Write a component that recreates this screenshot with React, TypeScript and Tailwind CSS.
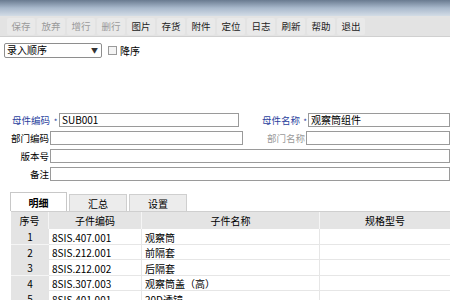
import React from 'react';

const font = { fontFamily: '"Noto Sans CJK SC", "Noto Sans", sans-serif' };

const tools = [
    { label: '保存', off: true },
    { label: '放弃', off: true },
    { label: '增行', off: true },
    { label: '删行', off: true },
    { label: '图片' },
    { label: '存货' },
    { label: '附件' },
    { label: '定位' },
    { label: '日志' },
    { label: '刷新' },
    { label: '帮助' },
    { label: '退出' },
];

const rows = [
    { no: 1, code: '8SIS.407.001', name: '观察筒' },
    { no: 2, code: '8SIS.212.001', name: '前隔套' },
    { no: 3, code: '8SIS.212.002', name: '后隔套' },
    { no: 4, code: '8SIS.307.003', name: '观察筒盖（高）' },
    { no: 5, code: '8SIS.401.001', name: '20D透镜' },
];

function Field({ value, className }: { value?: string; className: string }) {
    return (
        <div className={`h-[14px] border border-[#9a9a9a] bg-white text-[10px] leading-[12px] pl-[2px] text-black whitespace-nowrap ${className}`}>
            {value}
        </div>
    );
}

// small required-field marker, centred on the label's line
function Star({ className }: { className: string }) {
    return (
        <span className={`flex items-center justify-center ${className}`}>
            <span className="text-[8px] leading-none mt-[4px] text-[#2a3f9e]">*</span>
        </span>
    );
}

function App() {
    return (
        <div className="w-[450px] h-[300px] bg-white overflow-hidden text-[9.5px] text-black whitespace-nowrap" style={font}>
            <div className="h-[16px] bg-gradient-to-b from-[#6a7b90] via-[#a9b9cc] to-[#d3dce6]" />

            <div className="h-[21px] bg-[#e3e3e3] border-b border-[#d0d0d0] flex items-center pl-[7px] gap-[2px]">
                {tools.map((t) => (
                    <div
                        key={t.label}
                        className={`w-[28px] h-[17px] flex items-center justify-center rounded-[2px] bg-[#e9e9e9] text-[9.5px] ${t.off ? 'text-[#9a9a9a]' : 'text-[#222]'}`}
                    >
                        {t.label}
                    </div>
                ))}
            </div>

            <div className="flex items-center h-[20px] pl-[4px] mt-[3px]">
                <div className="w-[98px] h-[15px] border border-[#8e8e8e] rounded-[2px] bg-white flex items-center justify-between pl-[2px] pr-[3px]">
                    <span className="text-[10px] leading-none">录入顺序</span>
                    <span className="text-[7px] leading-none text-[#333]">▼</span>
                </div>
                <div className="w-[9px] h-[9px] border border-[#9a9a9a] ml-[6px] bg-[#f4f4f4]" />
                <span className="ml-[3px] text-[10px]">降序</span>
            </div>

            <div className="mt-[53px] flex flex-col gap-[4px]">
                <div className="flex items-center h-[14px]">
                    <span className="w-[40px] ml-[12px] text-[#2a3f9e]">母件编码</span>
                    <Star className="w-[7px] h-[14px]" />
                    <Field value="SUB001" className="w-[180px]" />
                    <span className="ml-[23px] w-[40px] text-[#2a3f9e]">母件名称</span>
                    <Star className="w-[6px] h-[14px]" />
                    <Field value="观察筒组件" className="flex-1" />
                </div>
                <div className="flex items-center h-[14px]">
                    <span className="w-[50px] text-right pr-[1px]">部门编码</span>
                    <Field className="w-[193px]" />
                    <span className="w-[63px] text-right pr-[1px] text-[#9a9a9a]">部门名称</span>
                    <Field className="flex-1" />
                </div>
                <div className="flex items-center h-[14px]">
                    <span className="w-[50px] text-right pr-[1px]">版本号</span>
                    <Field className="flex-1" />
                </div>
                <div className="flex items-center h-[14px]">
                    <span className="w-[50px] text-right pr-[1px]">备注</span>
                    <Field className="flex-1" />
                </div>
            </div>

            <div className="mt-[11px] flex items-end pl-[10px] gap-[2px] h-[19px]">
                <div className="w-[57px] h-[19px] bg-white border border-b-0 border-[#c8c8c8] flex items-center justify-center font-bold text-[10px]">明细</div>
                <div className="w-[58px] h-[17px] bg-[#ececec] border border-b-0 border-[#cfcfcf] flex items-center justify-center text-[10px]">汇总</div>
                <div className="w-[58px] h-[17px] bg-[#ececec] border border-b-0 border-[#cfcfcf] flex items-center justify-center text-[10px]">设置</div>
            </div>

            <div className="ml-[11px] border-t border-[#cfcfcf]">
                <div className="grid grid-cols-[38px_93px_178px_1fr] h-[17px] bg-[#e4e4e4] text-[10px]">
                    <div className="flex items-center justify-center border-r border-[#f5f5f5]">序号</div>
                    <div className="flex items-center justify-center border-r border-[#f5f5f5]">子件编码</div>
                    <div className="flex items-center justify-center border-r border-[#f5f5f5]">子件名称</div>
                    <div className="flex items-center justify-center">规格型号</div>
                </div>
                {rows.map((r) => (
                    <div key={r.no} className="grid grid-cols-[38px_93px_178px_1fr] h-[15.5px] border-b border-[#e6e6e6] text-[10px]">
                        <div className="bg-[#e4e4e4] flex items-center justify-center border-b border-[#f5f5f5]">{r.no}</div>
                        <div className="flex items-center pl-[3px] border-r border-[#e6e6e6]">{r.code}</div>
                        <div className="flex items-center pl-[3px] border-r border-[#e6e6e6]">{r.name}</div>
                        <div />
                    </div>
                ))}
            </div>
        </div>
    );
}

export default App;
